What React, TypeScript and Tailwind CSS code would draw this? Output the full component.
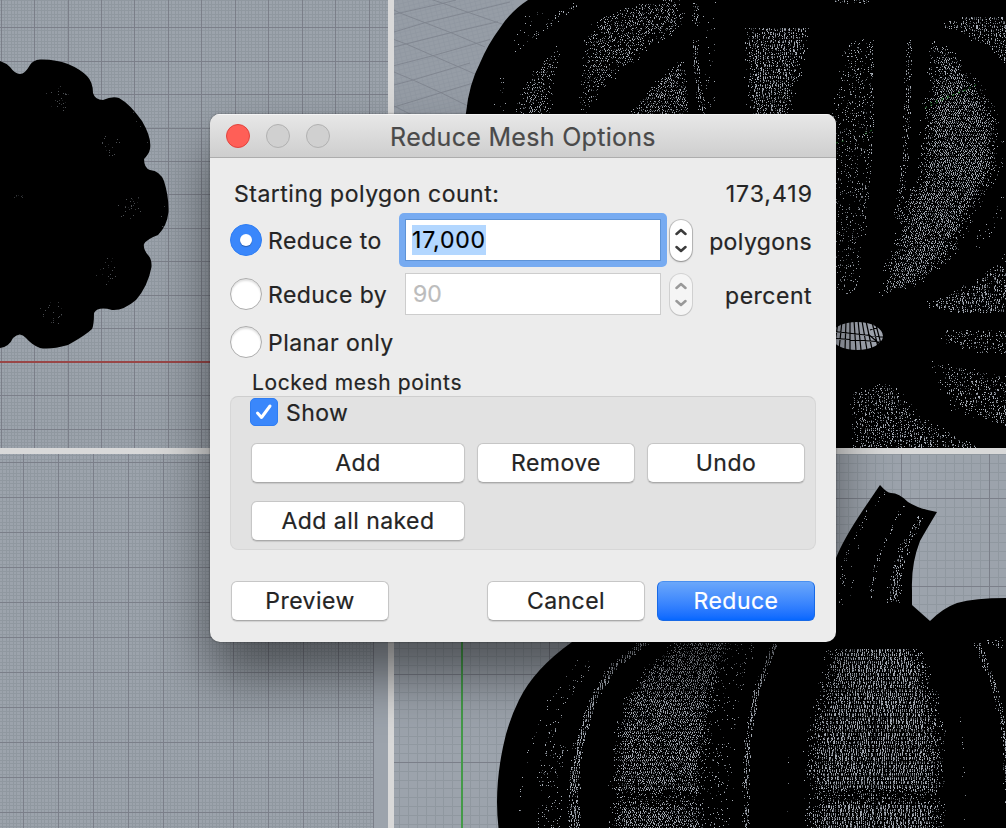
import React from "react";

type Point = [number, number];
type Patch = { pts: Point[]; d: number; edge?: number; slant?: number };

const range = (start: number, end: number, step: number) => {
  const out: number[] = [];
  for (let v = start; v < end; v += step) out.push(v);
  return out;
};

const hash = (x: number, y: number) => {
  let h = (Math.imul(x, 374761393) + Math.imul(y, 668265263)) | 0;
  h = Math.imul(h ^ (h >>> 13), 1274126177);
  return ((h ^ (h >>> 16)) >>> 0) / 4294967296;
};

// Builds the light gaps between mesh wires inside each patch, sorted in three tones.
function meshPaths(patches: Patch[]) {
  const tones = ["", "", ""];
  patches.forEach(({ pts, d, edge = 10, slant = 0 }) => {
    const ys = pts.map((p) => p[1]);
    const top = Math.floor(Math.min(...ys));
    const bottom = Math.max(...ys);
    const weight = d < 0.35 ? d * 0.8 : d;
    for (let y = top; y < bottom; y += 4) {
      const xs: number[] = [];
      pts.forEach(([x1, y1], i) => {
        const [x2, y2] = pts[(i + 1) % pts.length];
        const m = y + 0.5;
        if (y1 <= m !== y2 <= m) xs.push(x1 + ((m - y1) / (y2 - y1)) * (x2 - x1));
      });
      xs.sort((a, b) => a - b);
      for (let i = 0; i + 1 < xs.length; i += 2) {
        for (let x = Math.floor(xs[i]); x < xs[i + 1]; x += 2) {
          const dist = Math.min(x - xs[i], xs[i + 1] - x) + 1;
          const fall = Math.min(1, dist / edge);
          const shade = Math.abs(y - 796) < 8 ? 0.5 : 1;
          const level = weight * fall * shade;
          for (let k = 0; k < 4; k++) {
            const r = hash(x * 5 + k, y);
            if (r > level * (k === 3 ? 0.4 : 0.95)) continue;
            const px = Math.round(x + slant * k + hash(x, y) * 0.8);
            const tone = r < level * 0.38 ? 0 : r < level * 0.68 ? 1 : 2;
            tones[tone] += `M${px} ${y + k + 0.5}h1`;
          }
        }
      }
    }
  });
  return tones;
}

const band = (left: Point[], right: Point[]): Point[] => [...left, ...[...right].reverse()];
const ribbon = (line: Point[], w: number): Point[] =>
  band(line, line.map(([x, y]) => [x + w, y] as Point));

const perspectiveMesh = meshPaths([
  { pts: [[579, 60], [581, 40], [597, 17], [628, 5], [663, 0], [685, 0], [683, 27], [648, 50], [620, 73], [600, 92], [590, 114], [579, 114]], d: 0.5, edge: 14, slant: -0.5 },
  { pts: [[560, 42], [556, 70], [552, 114], [511, 114], [523, 83], [550, 50]], d: 0.55, edge: 14, slant: -0.5 },
  { pts: [[683, 57], [690, 114], [628, 114], [650, 85]], d: 0.7, edge: 8, slant: -0.5 },
  { pts: ribbon([[691, 40], [693, 70], [699, 114]], 7), d: 0.65, edge: 3 },
  { pts: [[692, 2], [698, 2], [699, 26], [693, 26]], d: 0.45, edge: 3 },
  { pts: [[570, 3], [580, 3], [556, 22], [532, 38], [511, 57], [520, 40], [548, 18]], d: 0.3, edge: 5 },
  { pts: [[520, 15], [548, 8], [516, 46], [505, 60]], d: 0.08, edge: 4 },
  { pts: [[495, 80], [512, 70], [505, 112], [492, 112]], d: 0.08, edge: 4 },
  { pts: [[741, 28], [812, 28], [800, 73], [792, 114], [747, 114]], d: 0.68, edge: 13 },
  { pts: [[702, 0], [716, 0], [714, 110], [702, 110]], d: 0.08, edge: 4 },
  { pts: [[830, 0], [872, 0], [868, 4], [835, 4]], d: 0.4, edge: 4 },
  { pts: [[845, 40], [872, 35], [873, 120], [870, 190], [863, 250], [857, 290], [836, 295], [830, 114], [836, 70]], d: 0.3, edge: 8 },
  { pts: ribbon([[868, 40], [869, 130], [861, 220]], 5), d: 0.45, edge: 4 },
  { pts: ribbon([[905, 40], [904, 112], [901, 160], [893, 220]], 6), d: 0.52, edge: 3 },
  { pts: [[929, 37], [952, 47], [975, 73], [993, 100], [1003, 127], [1004, 167], [977, 213], [957, 253], [923, 283], [880, 295], [880, 275], [893, 227], [901, 193], [913, 180], [922, 113]], d: 0.85, edge: 22, slant: -0.5 },
  { pts: [[937, 23], [968, 15], [1020, 13], [1020, 75], [1000, 60], [980, 43], [956, 30]], d: 0.55, edge: 9 },
  { pts: [[1006, 185], [1006, 222], [976, 252], [965, 256], [982, 220]], d: 0.2, edge: 10 },
  { pts: [[1020, 237], [1020, 312], [947, 312], [920, 303], [963, 283], [987, 267]], d: 0.6, edge: 18 },
  { pts: [[940, 330], [1020, 326], [1020, 357], [970, 350], [935, 340]], d: 0.36, edge: 14 },
  { pts: [[930, 360], [1020, 377], [1020, 428], [985, 422], [948, 408], [935, 385]], d: 0.45, edge: 18 },
  { pts: [[863, 387], [893, 380], [923, 417], [963, 438], [990, 448], [850, 448], [848, 390]], d: 0.5, edge: 14 },
]);

const frontMesh = meshPaths([
  { pts: ribbon([[574, 660], [546, 700], [524, 750], [516, 800], [517, 828]], 5), d: 0.16, edge: 3 },
  { pts: ribbon([[582, 660], [556, 700], [540, 740], [534, 790], [535, 828]], 14), d: 0.24, edge: 7 },
  { pts: ribbon([[550, 745], [545, 780], [545, 828]], 18), d: 0.2, edge: 5 },
  { pts: band([[636, 643], [608, 665], [587, 700], [573, 745], [567, 790], [568, 828]], [[648, 643], [618, 665], [596, 700], [583, 745], [579, 790], [580, 828]]), d: 1, edge: 4 },
  { pts: band([[671, 643], [644, 667], [624, 697], [613, 730], [608, 790], [608, 828]], [[734, 643], [720, 683], [714, 720], [708, 763], [706, 828]]), d: 0.82, edge: 16, slant: -0.4 },
  { pts: ribbon([[730, 643], [718, 683], [710, 730], [706, 780], [706, 828]], 27), d: 0.13, edge: 7 },
  { pts: ribbon([[771, 643], [753, 690], [744, 740], [742, 790], [743, 828]], 6), d: 0.95, edge: 3 },
  { pts: band([[825, 649], [819, 680], [808, 717], [802, 757], [804, 828]], [[925, 649], [933, 673], [943, 710], [946, 757], [946, 828]]), d: 0.98, edge: 24 },
  { pts: ribbon([[974, 643], [989, 680], [999, 720], [1003, 760], [1005, 828]], 6), d: 0.8, edge: 3 },
  { pts: [[975, 643], [1006, 632], [1006, 646]], d: 0.3 },
  { pts: ribbon([[787, 725], [786, 828]], 2), d: 0.12, edge: 2 },
  { pts: ribbon([[960, 715], [963, 828]], 2), d: 0.12, edge: 2 },
  { pts: band([[917, 511], [902, 540], [892, 560], [885, 600]], [[925, 513], [912, 540], [903, 567], [900, 600]]), d: 0.68, edge: 5 },
  { pts: ribbon([[901, 505], [883, 540], [872, 567], [868, 600]], 4), d: 0.36, edge: 3 },
  { pts: ribbon([[881, 492], [860, 520], [843, 553], [837, 605]], 4), d: 0.32, edge: 3 },
  { pts: ribbon([[865, 510], [852, 558], [848, 600]], 3), d: 0.12, edge: 3 },
]);

const speck = (cx: number, cy: number): Patch => ({
  pts: [[cx, cy - 17], [cx + 15, cy - 6], [cx + 12, cy + 10], [cx, cy + 16], [cx - 12, cy + 8], [cx - 14, cy - 5]],
  d: 0.22,
  edge: 14,
});

const topMesh = meshPaths([
  speck(60, 97), speck(112, 143), speck(130, 206), speck(107, 270), speck(50, 311),
  { pts: [[14, 195], [24, 195], [24, 199], [14, 199]], d: 0.4, edge: 2 },
  { pts: ribbon([[126, 108], [140, 126], [144, 142]], 4), d: 0.12, edge: 3 },
  { pts: ribbon([[158, 180], [162, 200], [159, 228]], 4), d: 0.08, edge: 3 },
]);

function Mesh({ paths, dim = false }: { paths: string[]; dim?: boolean }) {
  return (
    <g fill="none" strokeWidth="1" opacity={dim ? 0.45 : 1}>
      <path d={paths[0]} stroke="#a5abb4" />
      <path d={paths[1]} stroke="#757a82" />
      <path d={paths[2]} stroke="#3c4045" />
    </g>
  );
}

type GridProps = { x0: number; y0: number; x1: number; y1: number; ox: number; oy: number; step: number };

function Grid({ x0, y0, x1, y1, ox, oy, step }: GridProps) {
  const minor = step / 10;
  const lines = (inc: number) =>
    range(ox, x1, inc).filter((v) => v >= x0 - 1).map((x) => `M${Math.round(x) + 0.5} ${y0}V${y1}`).join("") +
    range(oy, y1, inc).filter((v) => v >= y0 - 1).map((y) => `M${x0} ${Math.round(y) + 0.5}H${x1}`).join("");
  return (
    <g fill="none" strokeWidth="1">
      <path d={lines(minor)} stroke="#9098a0" />
      <path d={lines(step)} stroke="#7b7f89" />
    </g>
  );
}

function TopView() {
  return (
    <svg className="block h-full w-full bg-[#9ca3ac]" viewBox="0 0 388 448">
      <Grid x0={0} y0={0} x1={388} y1={448} ox={0.6} oy={-6.3} step={33.45} />
      <path d="M0 362H388" stroke="#994747" strokeWidth="2" />
      <path d="M0 61Q6 63 10 67Q15 74 20 74Q25 74 30 65Q33 60 40 59.500Q55 59 68 64Q80 69 87 76Q93 82 93 93Q95 100 103 100Q112 96 119 98Q130 104 142 121Q152 138 150 149Q149 154 144 159Q144 168 150 170Q160 171 164 181Q169 197 168.500 212Q167 226 158 235Q147 239 144 244Q143 249 148 255Q152 259 151.500 267Q148 286 136 300Q123 311 112 310Q98 306 94 313Q94 325 92 329Q86 335 68 345Q50 350 40 348Q32 345 26 338Q20 331 13 338Q9 347 0 348Z" fill="#000" />
      <Mesh paths={topMesh} dim />
    </svg>
  );
}

function PerspectiveView() {
  return (
    <svg className="block h-full w-full bg-[#969da6]" viewBox="394 0 612 448">
      <defs>
        <pattern id="fine" width="5" height="4" patternUnits="userSpaceOnUse" patternTransform="rotate(-14)">
          <path d="M0 .5H5M.5 0V4" stroke="#8f96a0" strokeWidth=".7" fill="none" />
        </pattern>
      </defs>
      <rect x="394" width="120" height="120" fill="url(#fine)" />
      <path d="M394 14.300L443 3.300L456 0M394 32L425 22.700L468 12.300L510 2M394 47L451 32.700L498 21.700M394 65.700L433 55.700L490 39.500M394 85L413 80L470 63M394 107L441 92.700L480 81M394 10L400 13L425 22.700L451 32.700L485 47M430 -1L443 3.300L468 12.300L505 25M394 39.500L407 44.300L433 55.700L475 74M394 72L413 80L441 92.700L470 107M394 106L412 115" fill="none" stroke="#7f858e" strokeWidth=".9" />
      <path d="M528 0H1006V448H460Q460 135 466 113Q469 84 480 63Q488 44 500 28Q511 11 528 0Z" fill="#000" />
      <Mesh paths={perspectiveMesh} />
      <path d="M925 108L978 84M930 103L966 90M865 134L872 130M836 143L847 140" stroke="#2f9a38" strokeWidth="1" strokeDasharray="2 4" opacity=".75" />
      <ellipse cx="857" cy="336" rx="26" ry="14" fill="#a3a8b2" />
      <path d="M830 331L883 337M830 338L883 342M838 322L834 350M842 321L839 350M846 321L845 350M850 321L850 350M854 320L856 351M858 320L861 350M862 321L867 350M866 321L872 349M872 322L878 347M876 325L881 344M870 330L880 326M868 334L881 345" stroke="#000" strokeWidth="1.200" fill="none" />
    </svg>
  );
}

function RightView() {
  return (
    <svg className="block h-full w-full bg-[#9ca3ac]" viewBox="0 454 388 374">
      <Grid x0={0} y0={454} x1={373} y1={828} ox={-12} oy={427} step={35} />
      <path d="M373.500 454V828" stroke="#7b7f89" />
    </svg>
  );
}

function FrontView() {
  return (
    <svg className="block h-full w-full bg-[#9ca3ac]" viewBox="394 454 612 374">
      <Grid x0={394} y0={454} x1={1006} y1={828} ox={373} oy={410} step={88} />
      <path d="M462 454V828" stroke="#449a49" strokeWidth="2" />
      <path d="M498.500 828Q494 790 503 747Q508 722 519 700Q534 669 572 642L700 600L825 600L836 558Q843 540 863 510L880 485Q887 493 891 493Q899 493 908 502Q919 509 937 512Q925 532 920 541Q911 564 912 590V605L930 621Q943 608 957 603Q975 598 1006 598V828Z" fill="#000" />
      <Mesh paths={frontMesh} />
      <path d="M608 690H710M608 718H708M608 731H708M608 747H708M608 762H708M608 776H706M608 785H706M608 800H706M804 690H945M804 718H945M804 731H945M804 747H945M804 762H945M804 776H945M804 785H945M804 793H945M804 800H945M875.500 649V828" stroke="#000" strokeWidth="1" opacity=".8" />
    </svg>
  );
}

function Radio({ checked = false, label }: { checked?: boolean; label: string }) {
  return (
    <div className="flex w-[175px] items-center gap-[6px]">
      {checked ? (
        <span className="flex h-8 w-8 items-center justify-center rounded-full border border-[#2f7df2] bg-[#3a87fb]">
          <span className="h-3 w-3 rounded-full bg-white shadow-[0_1px_1px_rgba(0,0,0,0.3)]" />
        </span>
      ) : (
        <span className="h-8 w-8 rounded-full border border-[#adadad] bg-white shadow-[inset_0_2px_2px_rgba(0,0,0,0.12)]" />
      )}
      <span className="pt-[2px] tracking-[0.45px] whitespace-nowrap">{label}</span>
    </div>
  );
}

function Stepper({ disabled = false }: { disabled?: boolean }) {
  return (
    <span
      className={
        disabled
          ? "ml-[9px] flex h-[41px] w-[22px] items-center justify-center rounded-[11px] bg-[#f5f5f5] text-[#999] shadow-[0_0_0_1px_rgba(0,0,0,0.11),0_1px_1px_rgba(0,0,0,0.1)]"
          : "ml-[3px] flex h-[41px] w-[22px] items-center justify-center rounded-[11px] bg-white text-[#3c3c3c] shadow-[0_0_0_1px_rgba(0,0,0,0.17),0_1px_2px_rgba(0,0,0,0.3)]"
      }
    >
      <svg width="12" height="25" viewBox="0 0 12 25" fill="none" stroke="currentColor" strokeWidth="2.500" strokeLinecap="round" strokeLinejoin="round">
        <path d="M1.500 6L6 2L10.500 6M1.500 19L6 23L10.500 19" />
      </svg>
    </span>
  );
}

function Button({ children, wide = false, primary = false }: { children: React.ReactNode; wide?: boolean; primary?: boolean }) {
  return (
    <button
      className={[
        "h-10 rounded-[6px] pb-[1px] tracking-[0.45px] whitespace-nowrap",
        wide ? "w-[214px]" : "w-[158px]",
        primary
          ? "border border-[#1769e6] border-t-[#4a90f0] bg-linear-to-b from-[#6ba7fa] to-[#0567ff] text-white"
          : "border border-[#c6c6c6] border-b-[#aaaaaa] bg-white shadow-[0_1px_1px_rgba(0,0,0,0.12)]",
      ].join(" ")}
    >
      {children}
    </button>
  );
}

function ReduceMeshDialog() {
  return (
    <section className="absolute top-[114px] left-[210px] flex h-[528px] w-[626px] flex-col overflow-hidden rounded-[10px] bg-[#ececec] text-[23px] leading-7 text-[#242424] shadow-[0_0_2px_rgba(0,0,0,0.5),0_34px_56px_rgba(0,0,0,0.5)] [-webkit-text-stroke:0.2px]">
      <header className="grid h-11 shrink-0 grid-cols-[104px_1fr_104px] items-center border-b border-[#adadad] bg-linear-to-b from-[#e8e8e8] to-[#cecece] px-4 shadow-[inset_0_1px_0_#f5f5f5]">
        <div className="flex gap-4">
          <span className="h-6 w-6 rounded-full border border-[#e0443e] bg-[#ff5f57]" />
          <span className="h-6 w-6 rounded-full border border-[#b1b1b1] bg-[#d0d0d0]" />
          <span className="h-6 w-6 rounded-full border border-[#b1b1b1] bg-[#d0d0d0]" />
        </div>
        <h1 className="pt-[2px] text-center text-[25px] tracking-[0.3px] whitespace-nowrap text-[#4a4a4a]">Reduce Mesh Options</h1>
      </header>

      <div className="flex flex-1 flex-col pt-[18px] pr-5 pl-5">
        <div className="flex h-9 items-center justify-between pr-1 pl-1 tracking-[0.5px]">
          <span>Starting polygon count:</span>
          <span className="-mr-[1px] tracking-[1px]">173,419</span>
        </div>
        <div className="mt-[1px] flex h-[54px] items-center pr-1">
          <Radio checked label="Reduce to" />
          <div className="-ml-[6px] flex h-[54px] w-[268px] items-center rounded-[5px] bg-[#77abf1] p-[6px]">
            <div className="flex h-full flex-1 items-center border border-[#5e93d6] bg-white pl-[6px]">
              <span className="h-[30px] bg-[#b3d7ff] leading-[30px] tracking-[0.8px] text-black">17,000</span>
            </div>
          </div>
          <Stepper />
          <span className="ml-auto pt-1 tracking-[0.4px]">polygons</span>
        </div>
        <div className="flex h-[54px] items-center pr-1">
          <Radio label="Reduce by" />
          <div className="flex h-[42px] w-[256px] items-center border border-[#cdcdcd] bg-white pl-[7px] text-[#bcbcbc]">90</div>
          <Stepper disabled />
          <span className="ml-auto pt-1 tracking-[0.5px]">percent</span>
        </div>
        <div className="flex h-[42px] items-center">
          <Radio label="Planar only" />
        </div>
        <div className="h-[33px] pt-[6px] pl-[22px] text-[21px] tracking-[0.6px]">Locked mesh points</div>
        <div className="h-[154px] w-[586px] rounded-[8px] border border-[#d7d7d7] border-t-[#cecece] bg-[#e2e2e2] pl-5">
          <label className="-ml-[1px] flex h-[30px] items-center gap-2 pb-[1px]">
            <span className="flex h-7 w-7 items-center justify-center rounded-[5px] border border-[#2f7df2] bg-[#3a87fb]">
              <svg width="20" height="20" viewBox="0 0 20 20" fill="none" stroke="#fff" strokeWidth="3" strokeLinecap="round" strokeLinejoin="round">
                <path d="M3.500 11L7.500 15.500L16 4" />
              </svg>
            </span>
            <span className="pt-[2px] tracking-[0.4px]">Show</span>
          </label>
          <div className="mt-4 flex gap-3">
            <Button wide>Add</Button>
            <Button>Remove</Button>
            <Button>Undo</Button>
          </div>
          <div className="mt-[18px] flex">
            <Button wide>Add all naked</Button>
          </div>
        </div>
        <footer className="mt-[31px] flex gap-3 pl-[1px]">
          <Button>Preview</Button>
          <span className="w-[74px]" />
          <Button>Cancel</Button>
          <Button primary>Reduce</Button>
        </footer>
      </div>
    </section>
  );
}

export default function App() {
  return (
    <main className="relative h-[828px] w-[1006px] overflow-hidden bg-[#d9d9d9] font-['Inter',sans-serif]">
      <div className="grid h-full grid-cols-[388px_612px] grid-rows-[448px_374px] gap-[6px]">
        <TopView />
        <PerspectiveView />
        <RightView />
        <FrontView />
      </div>
      <ReduceMeshDialog />
    </main>
  );
}
